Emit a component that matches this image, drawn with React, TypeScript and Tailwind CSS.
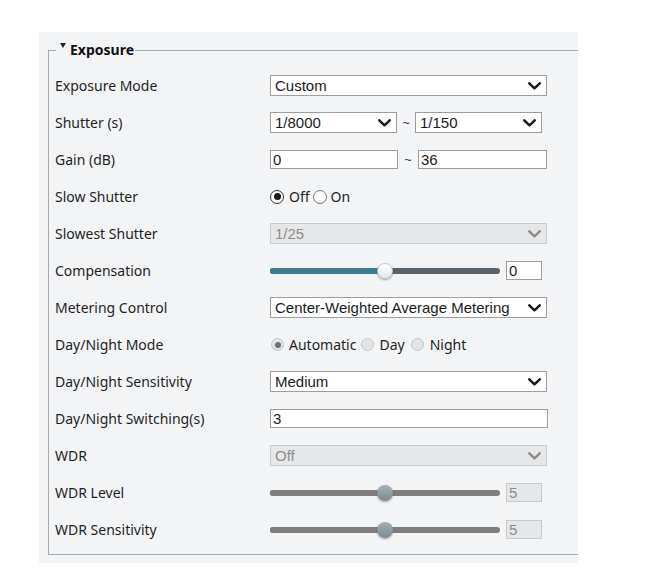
import React from 'react';

const labelFont = { fontFamily: '"Noto Sans", "Open Sans", sans-serif' };
const ctrlFont = { fontFamily: '"Liberation Sans", Arial, sans-serif' };

const Chevron = ({ disabled = false }: { disabled?: boolean }) => (
  <svg width="13" height="8" viewBox="0 0 13 8" className="shrink-0">
    <polyline
      points="1.3,1.3 6.5,6.3 11.7,1.3"
      fill="none"
      stroke={disabled ? '#8c8c8c' : '#1a1a1a'}
      strokeWidth="2.5"
      strokeLinecap="round"
      strokeLinejoin="round"
    />
  </svg>
);

const Select = ({ value, w, disabled = false }: { value: string; w: string; disabled?: boolean }) => (
  <div
    style={ctrlFont}
    className={`${w} h-[21px] flex items-center justify-between pl-[4px] pr-[5px] text-[15px] leading-none border ${
      disabled ? 'bg-[#e6e7e8] border-[#c9cacb] text-[#8d8d8d]' : 'bg-white border-[#9d9d9d] text-[#1b1b1b]'
    }`}
  >
    <span>{value}</span>
    <Chevron disabled={disabled} />
  </div>
);

const Input = ({ value, w, disabled = false }: { value: string; w: string; disabled?: boolean }) => (
  <div
    style={ctrlFont}
    className={`${w} h-[19px] flex items-center pl-[2px] text-[15px] leading-none border ${
      disabled ? 'bg-[#e6e7e8] border-[#c9cacb] text-[#8d8d8d]' : 'bg-white border-[#9d9d9d] text-[#1b1b1b]'
    }`}
  >
    {value}
  </div>
);

const Radio = ({ checked, soft = false }: { checked: boolean; soft?: boolean }) =>
  soft ? (
    <span className="w-[13px] h-[13px] rounded-full border border-[#c3c4c6] bg-[#e3e4e6] flex items-center justify-center shrink-0">
      {checked && <span className="w-[6px] h-[6px] rounded-full bg-[#6f7071]" />}
    </span>
  ) : (
    <span
      className={`w-[14px] h-[14px] rounded-full border bg-white flex items-center justify-center shrink-0 ${
        checked ? 'border-[#333]' : 'border-[#777]'
      }`}
    >
      {checked && <span className="w-[7px] h-[7px] rounded-full bg-[#1a1a1a]" />}
    </span>
  );

const Slider = ({ value, active = false }: { value: string; active?: boolean }) => (
  <div className="flex items-center">
    <div className="relative w-[230px] h-[16px] flex items-center">
      <div className={`w-full h-[6px] rounded-full flex overflow-hidden ${active ? 'bg-[#58636b]' : 'bg-[#7e7e7e]'}`}>
        <div className={`w-[115px] h-full ${active ? 'bg-[#3e7c90]' : 'bg-[#7e7e7e]'}`} />
      </div>
      <div
        className={`absolute left-[107px] top-0 w-[16px] h-[16px] rounded-full ${
          active
            ? 'bg-gradient-to-b from-white to-[#e4e6e8] border border-[#c4c7ca] shadow-[0_1px_2px_rgba(0,0,0,0.35)]'
            : 'bg-gradient-to-b from-[#a5b1b9] to-[#7c8991] shadow-[0_1px_2px_rgba(0,0,0,0.35)]'
        }`}
      />
    </div>
    <div className="ml-[6px]">
      <Input value={value} w="w-[36px]" disabled={!active} />
    </div>
  </div>
);

const Row = ({ label, children }: { label: string; children: React.ReactNode }) => (
  <div className="h-[37px] flex items-center">
    <div style={labelFont} className="w-[215px] text-[14px] text-[#1f1f1f]">
      {label}
    </div>
    <div className="flex items-center">{children}</div>
  </div>
);

export default function App() {
  return (
    <div className="w-[650px] h-[582px] bg-white pt-[32px] pl-[39px]">
      <div className="w-[539px] h-[531px] bg-[#f3f4f6] pt-[9px] pl-[9px]">
        <fieldset className="w-full border border-r-0 border-[#a8a9aa] pl-[6px] pb-[6px]">
          <legend style={labelFont} className="ml-[1px] pl-[4px] pr-[1px] h-[18px] flex items-center gap-[4px]">
            <svg width="6" height="5" viewBox="0 0 6 5" className="-mt-[9px]">
              <polygon points="0,0 6,0 3,5" fill="#222" />
            </svg>
            <span className="text-[14px] font-bold text-[#111] leading-[18px]">Exposure</span>
          </legend>
          <div className="pt-[8px]">
            <Row label="Exposure Mode">
              <Select value="Custom" w="w-[277px]" />
            </Row>
            <Row label="Shutter (s)">
              <Select value="1/8000" w="w-[127px]" />
              <span style={ctrlFont} className="w-[18px] text-center text-[13px] text-[#333]">~</span>
              <Select value="1/150" w="w-[127px]" />
            </Row>
            <Row label="Gain (dB)">
              <Input value="0" w="w-[128px]" />
              <span style={ctrlFont} className="w-[20px] text-center text-[13px] text-[#333]">~</span>
              <Input value="36" w="w-[129px]" />
            </Row>
            <Row label="Slow Shutter">
              <div style={labelFont} className="flex items-center text-[14px] text-[#1f1f1f]">
                <Radio checked />
                <span className="ml-[5px] mr-[3px]">Off</span>
                <Radio checked={false} />
                <span className="ml-[4px]">On</span>
              </div>
            </Row>
            <Row label="Slowest Shutter">
              <Select value="1/25" w="w-[277px]" disabled />
            </Row>
            <Row label="Compensation">
              <Slider value="0" active />
            </Row>
            <Row label="Metering Control">
              <Select value="Center-Weighted Average Metering" w="w-[277px]" />
            </Row>
            <Row label="Day/Night Mode">
              <div style={labelFont} className="flex items-center text-[14px] text-[#1f1f1f] pl-[1px]">
                <Radio checked soft />
                <span className="ml-[5px] mr-[5px]">Automatic</span>
                <Radio checked={false} soft />
                <span className="ml-[5px] mr-[6px]">Day</span>
                <Radio checked={false} soft />
                <span className="ml-[6px]">Night</span>
              </div>
            </Row>
            <Row label="Day/Night Sensitivity">
              <Select value="Medium" w="w-[277px]" />
            </Row>
            <Row label="Day/Night Switching(s)">
              <Input value="3" w="w-[278px]" />
            </Row>
            <Row label="WDR">
              <Select value="Off" w="w-[277px]" disabled />
            </Row>
            <Row label="WDR Level">
              <Slider value="5" />
            </Row>
            <Row label="WDR Sensitivity">
              <Slider value="5" />
            </Row>
          </div>
        </fieldset>
      </div>
    </div>
  );
}
